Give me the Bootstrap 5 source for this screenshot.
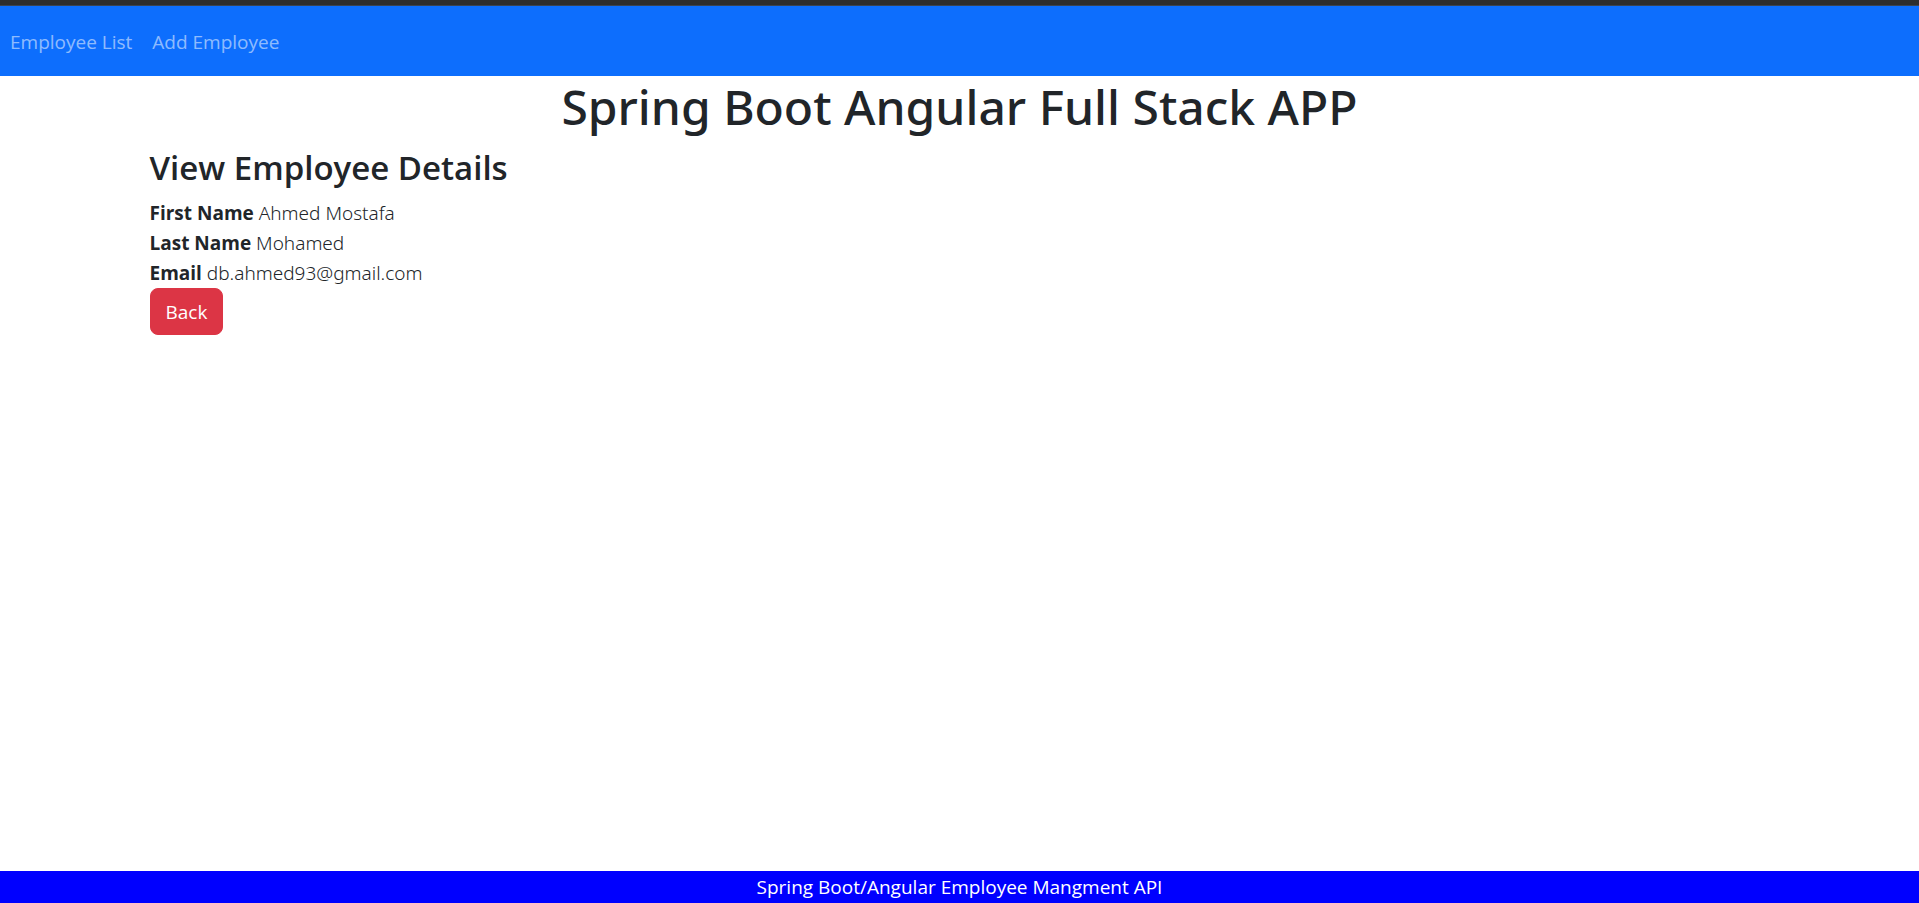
<!DOCTYPE html>
<html lang="en">
<head>
<meta charset="utf-8">
<meta name="viewport" content="width=device-width, initial-scale=1">
<title>Employee Management</title>
<link href="https://cdn.jsdelivr.net/npm/bootstrap@5.3.0/dist/css/bootstrap.min.css" rel="stylesheet">
<style>
  :root { font-size: 20px; --app-font: "Open Sans", "Noto Sans", sans-serif; }
  body { font-family: var(--app-font); font-size: 19px; line-height: 30px; color: #212529; }
  .window-edge { height: 6px; background: #2d2d2d; border-bottom: 1px solid #3b4451; }
  .app-nav { --bs-navbar-color: rgba(255, 255, 255, .55); --bs-navbar-hover-color: rgba(255, 255, 255, .75); --bs-nav-link-color: rgba(255, 255, 255, .55); }
  .app-nav .nav-link { font-size: 19px; line-height: 32px; padding-bottom: 8px; }
  .app-title, .page-title { margin-bottom: 8px; }
  .app-title { font-family: "Noto Sans", sans-serif; font-weight: 500; font-size: 48px; line-height: 62px; }
  .page-title { font-weight: 600; font-size: 33px; line-height: 44px; }
  .app-content { max-width: 1650px; }
  .detail-value { font-family: "Noto Sans", sans-serif; font-weight: 300; }
  .btn-back { --bs-btn-font-size: 19px; --bs-btn-line-height: 30px; --bs-btn-border-radius: 8px; }
  .app-footer { background: #00f; line-height: 32px; }
</style>
</head>
<body class="d-flex flex-column min-vh-100">
<div class="window-edge"></div>
<nav class="navbar navbar-expand-sm bg-primary app-nav">
  <ul class="navbar-nav">
    <li class="nav-item"><a class="nav-link" href="#employees">Employee List</a></li>
    <li class="nav-item"><a class="nav-link" href="#add">Add Employee</a></li>
  </ul>
</nav>
<h1 class="app-title text-center">Spring Boot Angular Full Stack APP</h1>
<main class="container app-content flex-grow-1">
  <h3 class="page-title">View Employee Details</h3>
  <div><strong>First Name</strong> <span class="detail-value">Ahmed Mostafa</span></div>
  <div><strong>Last Name</strong> <span class="detail-value">Mohamed</span></div>
  <div><strong>Email</strong> <span class="detail-value">db.ahmed93@gmail.com</span></div>
  <button type="button" class="btn btn-danger btn-back d-block">Back</button>
</main>
<footer class="app-footer text-white text-center">Spring Boot/Angular Employee Mangment API</footer>
<script src="https://cdn.jsdelivr.net/npm/bootstrap@5.3.0/dist/js/bootstrap.bundle.min.js"></script>
</body>
</html>
